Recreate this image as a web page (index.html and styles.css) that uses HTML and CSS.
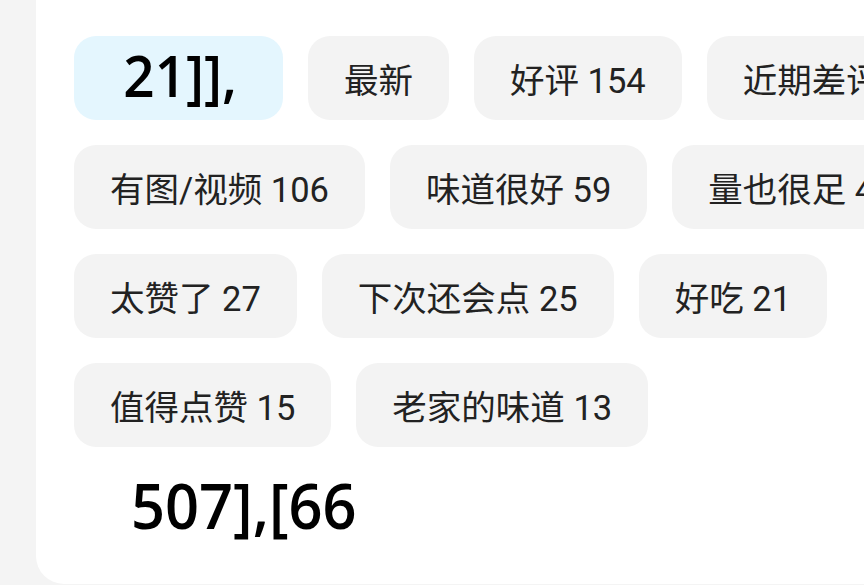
FILE: index.html
```html
<!DOCTYPE html>
<html lang="zh">
<head>
<meta charset="utf-8">
<link rel="stylesheet" href="styles.css">
</head>
<body>
<div class="card">
  <div class="rows">
    <div class="row">
      <div class="chip chip-active"><span class="big">21]],</span></div>
      <div class="chip">最新</div>
      <div class="chip">好评 154</div>
      <div class="chip">近期差评 3</div>
    </div>
    <div class="row">
      <div class="chip">有图/视频 106</div>
      <div class="chip">味道很好 59</div>
      <div class="chip">量也很足 42</div>
    </div>
    <div class="row">
      <div class="chip">太赞了 27</div>
      <div class="chip">下次还会点 25</div>
      <div class="chip">好吃 21</div>
    </div>
    <div class="row">
      <div class="chip">值得点赞 15</div>
      <div class="chip">老家的味道 13</div>
    </div>
  </div>
  <div class="footer"><span class="big big-footer">507],[66</span></div>
</div>
</body>
</html>
```
FILE: styles.css
```css
html, body {
  margin: 0;
  padding: 0;
  background: #f4f4f4;
  overflow: hidden;
  width: 864px;
  height: 585px;
}
.card {
  margin-left: 36px;
  width: 900px;
  height: 584px;
  background: #ffffff;
  border-radius: 0 0 28px 28px;
  box-sizing: border-box;
  padding: 36px 0 0 38px;
}
.rows {
  display: flex;
  flex-direction: column;
  gap: 25px;
}
.row {
  display: flex;
  gap: 25px;
  white-space: nowrap;
}
.chip {
  flex: none;
  height: 84px;
  padding: 0 36px;
  background: #f3f3f3;
  border-radius: 22px;
  display: flex;
  align-items: center;
  justify-content: center;
  font-family: Roboto, "Noto Sans CJK SC", sans-serif;
  font-size: 34.5px;
  color: #222222;
}
.chip-active {
  background: #e4f6fe;
  width: 209px;
  box-sizing: border-box;
  padding: 0 0 6px 4px;
}
.big {
  display: inline-block;
  font-family: "Open Sans", "Noto Sans", sans-serif;
  font-weight: 600;
  color: #000000;
  font-size: 58px;
  line-height: 1;
  transform: scaleX(0.945);
}
.footer {
  padding: 26px 0 0 57px;
}
.big-footer {
  font-size: 63px;
  transform-origin: left center;
}
```
